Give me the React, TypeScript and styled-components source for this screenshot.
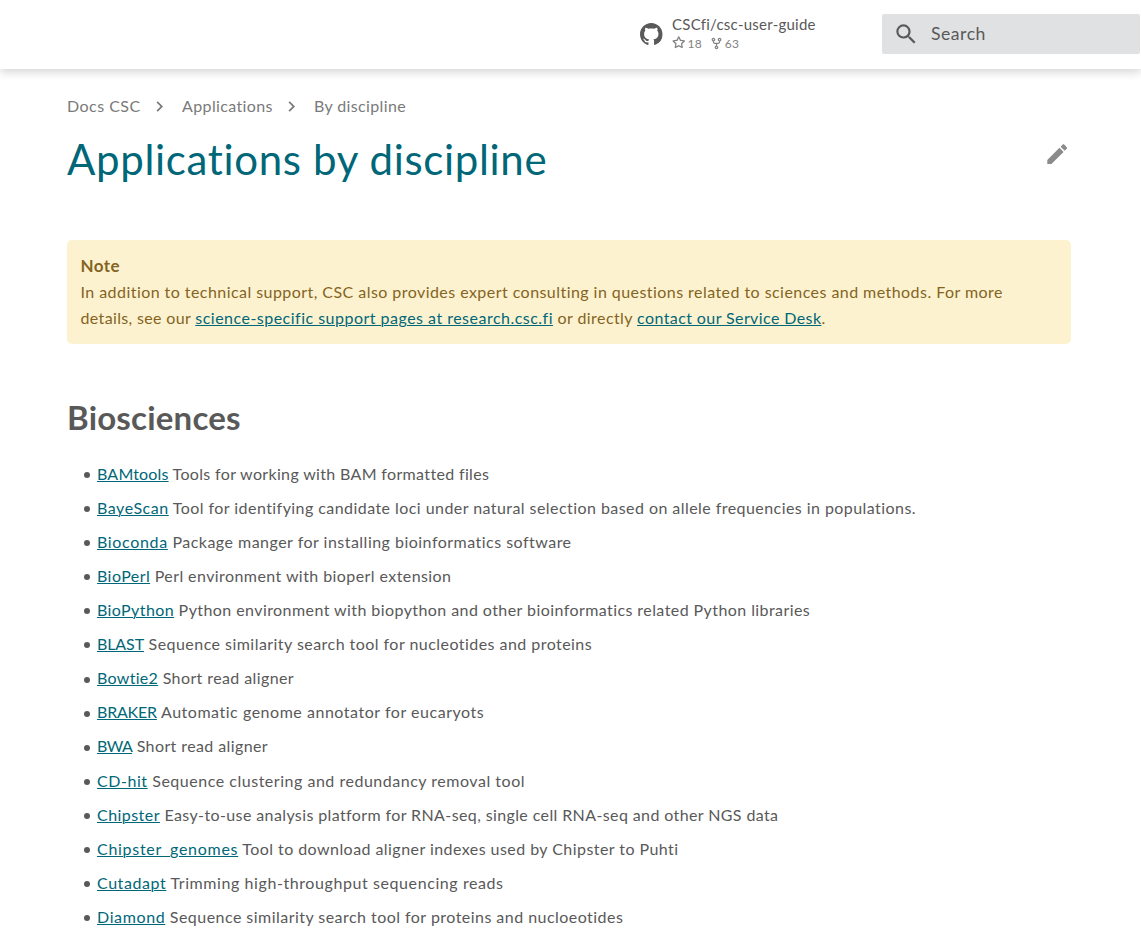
import React from "react";
import styled, { createGlobalStyle } from "styled-components";

const GlobalStyle = createGlobalStyle`
  html { overflow: hidden; }
  body {
    margin: 0;
    height: 937px;
    overflow: hidden;
    background: #fff;
    color: #595959;
    font-family: Lato, "Open Sans", sans-serif;
    font-size: 16px;
  }
`;

const Header = styled.header`
  display: flex;
  align-items: center;
  height: 69px;
  box-sizing: border-box;
  padding: 0 1px 1px 640px;
  background: #fff;
  box-shadow: 0 4.4px 8.8px rgba(0, 0, 0, 0.17);
`;

const Source = styled.a`
  display: flex;
  align-items: center;
  width: 242px;
  gap: 9.5px;
  flex: none;
`;

const SourceText = styled.div`
  display: flex;
  flex-direction: column;
`;

const RepoName = styled.span`
  font-size: 15px;
  line-height: 17px;
  padding-bottom: 1px;
  white-space: nowrap;
  letter-spacing: 0.25px;
`;

const Facts = styled.div`
  display: flex;
  gap: 8px;
  height: 18px;
  align-items: center;
  font-size: 12px;
  letter-spacing: 0.2px;
  color: #828282;
`;

const Fact = styled.span`
  display: flex;
  align-items: center;
  gap: 2px;
`;

const Search = styled.label`
  display: flex;
  align-items: center;
  flex: 1;
  height: 40px;
  box-sizing: border-box;
  padding-left: 11px;
  gap: 11.5px;
  border-radius: 2px;
  background: #e0e1e2;
  font-size: 17.6px;
  letter-spacing: 0.55px;
`;

const SearchText = styled.span`
  padding-bottom: 1px;
`;

const Icon = styled.svg<{ $size: number }>`
  width: ${(p) => p.$size}px;
  height: ${(p) => p.$size}px;
  flex: none;
  fill: currentColor;
`;

const Main = styled.main`
  width: 1004px;
  margin-left: 67px;
  padding-top: 25px;
`;

const Crumbs = styled.nav`
  display: flex;
  align-items: center;
  height: 26px;
  color: #7a7a7a;
`;

const Crumb = styled.span<{ $w: number; $track: number }>`
  width: ${(p) => p.$w}px;
  padding-bottom: 3px;
  letter-spacing: ${(p) => p.$track}px;
  white-space: nowrap;
`;

const CrumbArrow = styled(Icon)`
  margin: 0 12px 1px 8px;
`;

const TitleRow = styled.div`
  display: flex;
  justify-content: space-between;
  align-items: flex-start;
  height: 120px;
  color: #8b8b8b;
`;

const Title = styled.h1`
  margin: 13px 0 0;
  color: #006778;
  font-size: 42px;
  font-weight: 400;
  line-height: 52px;
  letter-spacing: 0.67px;
`;

const EditIcon = styled(Icon)`
  margin: 21px 1px 0 0;
`;

const Note = styled.section`
  height: 104px;
  box-sizing: border-box;
  padding: 13px 13.5px;
  border-radius: 5px;
  background: #fdf2d0;
  color: #846422;
  line-height: 26px;
`;

const NoteTitle = styled.div`
  font-weight: 700;
  font-size: 17px;
  letter-spacing: 0.45px;
`;

const NoteLine = styled.div`
  white-space: nowrap;
`;

const Tracked = styled.span<{ $track: number }>`
  letter-spacing: ${(p) => p.$track}px;
`;

const Link = styled.a<{ $track: number }>`
  color: #006778;
  letter-spacing: ${(p) => p.$track}px;
  text-decoration: underline;
  text-decoration-thickness: 1px;
  text-underline-offset: 1px;
`;

const Section = styled.h2`
  margin: 52px 0 22.32px;
  font-size: 33px;
  line-height: 42px;
  font-weight: 700;
  letter-spacing: 0.2px;
`;

const List = styled.ul`
  list-style: none;
  margin: 0;
  padding: 0 0 0 17px;
`;

const Item = styled.li`
  display: flex;
  align-items: center;
  height: 26px;
  margin-bottom: 8.08px;
  white-space: pre;
  &::before {
    content: "";
    width: 6px;
    height: 6px;
    margin: 3.5px 7.5px 0 -0.5px;
    border-radius: 50%;
    background: #595959;
  }
`;

type Entry = [name: string, nameTrack: number, text: string, textTrack: number];

const entries: Entry[] = [
  ["BAMtools", 0.18, "Tools for working with BAM formatted files", 0.34],
  ["BayeScan", 0.55, "Tool for identifying candidate loci under natural selection based on allele frequencies in populations.", 0.44],
  ["Bioconda", 0.67, "Package manger for installing bioinformatics software", 0.48],
  ["BioPerl", 0.44, "Perl environment with bioperl extension", 0.42],
  ["BioPython", 0.41, "Python environment with biopython and other bioinformatics related Python libraries", 0.425],
  ["BLAST", -0.1, "Sequence similarity search tool for nucleotides and proteins", 0.455],
  ["Bowtie2", 0.3, "Short read aligner", 0.4],
  ["BRAKER", -0.2, "Automatic genome annotator for eucaryots", 0.53],
  ["BWA", -0.6, "Short read aligner", 0.4],
  ["CD-hit", 0.55, "Sequence clustering and redundancy removal tool", 0.52],
  ["Chipster", 0.45, "Easy-to-use analysis platform for RNA-seq, single cell RNA-seq and other NGS data", 0.387],
  ["Chipster_genomes", 0.71, "Tool to download aligner indexes used by Chipster to Puhti", 0.445],
  ["Cutadapt", 0.57, "Trimming high-throughput sequencing reads", 0.585],
  ["Diamond", 0.62, "Sequence similarity search tool for proteins and nucloeotides", 0.462],
];

const MAGNIFY =
  "M9.5 3A6.5 6.5 0 0 1 16 9.5c0 1.61-.59 3.09-1.56 4.23l.27.27h.79l5 5-1.5 1.5-5-5v-.79l-.27-.27A6.516 6.516 0 0 1 9.5 16 6.5 6.5 0 0 1 3 9.5 6.5 6.5 0 0 1 9.5 3m0 2C7 5 5 7 5 9.5S7 14 9.5 14 14 12 14 9.5 12 5 9.5 5z";
const PENCIL =
  "M20.71 7.04c.39-.39.39-1.04 0-1.41l-2.34-2.34c-.37-.39-1.02-.39-1.41 0l-1.84 1.83 3.75 3.75M3 17.25V21h3.75L17.81 9.93l-3.75-3.75L3 17.25z";
const CHEVRON = "M8.59 16.58 13.17 12 8.59 7.41 10 6l6 6-6 6-1.41-1.42z";
const GITHUB =
  "M8 0C3.58 0 0 3.58 0 8c0 3.54 2.29 6.53 5.47 7.59.4.07.55-.17.55-.38 0-.19-.01-.82-.01-1.49-2.01.37-2.53-.49-2.69-.94-.09-.23-.48-.94-.82-1.13-.28-.15-.68-.52-.01-.53.63-.01 1.08.58 1.23.82.72 1.21 1.87.87 2.33.66.07-.52.28-.87.51-1.07-1.78-.2-3.64-.89-3.64-3.95 0-.87.31-1.59.82-2.15-.08-.2-.36-1.02.08-2.12 0 0 .67-.21 2.2.82.64-.18 1.32-.27 2-.27s1.36.09 2 .27c1.53-1.04 2.2-.82 2.2-.82.44 1.1.16 1.92.08 2.12.51.56.82 1.27.82 2.15 0 3.07-1.87 3.75-3.65 3.95.29.25.54.73.54 1.48 0 1.07-.01 1.93-.01 2.2 0 .21.15.46.55.38A8.01 8.01 0 0 0 16 8c0-4.42-3.58-8-8-8z";
const STAR =
  "M8 .25a.75.75 0 0 1 .673.418l1.882 3.815 4.21.612a.75.75 0 0 1 .416 1.279l-3.046 2.97.719 4.192a.751.751 0 0 1-1.088.791L8 12.347l-3.766 1.98a.75.75 0 0 1-1.088-.79l.72-4.194L.818 6.374a.75.75 0 0 1 .416-1.28l4.21-.611L7.327.668A.75.75 0 0 1 8 .25Zm0 2.445L6.615 5.5a.75.75 0 0 1-.564.41l-3.097.45 2.24 2.184a.75.75 0 0 1 .216.664l-.528 3.084 2.769-1.456a.75.75 0 0 1 .698 0l2.77 1.456-.53-3.084a.75.75 0 0 1 .216-.664l2.24-2.183-3.096-.45a.75.75 0 0 1-.564-.41L8 2.694Z";
const FORK =
  "M5 5.372v.878c0 .414.336.75.75.75h4.5a.75.75 0 0 0 .75-.75v-.878a2.25 2.25 0 1 1 1.5 0v.878a2.25 2.25 0 0 1-2.25 2.25h-1.5v2.128a2.251 2.251 0 1 1-1.5 0V8.5h-1.5A2.25 2.25 0 0 1 3.5 6.25v-.878a2.25 2.25 0 1 1 1.5 0ZM5 3.25a.75.75 0 1 0-1.5 0 .75.75 0 0 0 1.5 0Zm6.75.75a.75.75 0 1 0 0-1.5.75.75 0 0 0 0 1.5Zm-3 8.75a.75.75 0 1 0-1.5 0 .75.75 0 0 0 1.5 0Z";

export default function App() {
  return (
    <>
      <GlobalStyle />
      <Header>
        <Source>
          <Icon $size={22.5} viewBox="0 0 16 16"><path d={GITHUB} /></Icon>
          <SourceText>
            <RepoName>CSCfi/csc-user-guide</RepoName>
            <Facts>
              <Fact><Icon $size={13.5} viewBox="0 0 16 16"><path d={STAR} /></Icon>18</Fact>
              <Fact><Icon $size={13} viewBox="0 0 16 16"><path d={FORK} /></Icon>63</Fact>
            </Facts>
          </SourceText>
        </Source>
        <Search>
          <Icon $size={26.4} viewBox="0 0 24 24"><path d={MAGNIFY} /></Icon>
          <SearchText>Search</SearchText>
        </Search>
      </Header>
      <Main>
        <Crumbs>
          <Crumb $w={74} $track={0.48}>Docs CSC</Crumb>
          <CrumbArrow $size={21} viewBox="0 0 24 24"><path d={CHEVRON} /></CrumbArrow>
          <Crumb $w={91} $track={0.38}>Applications</Crumb>
          <CrumbArrow $size={21} viewBox="0 0 24 24"><path d={CHEVRON} /></CrumbArrow>
          <Crumb $w={92} $track={0.37}>By discipline</Crumb>
        </Crumbs>
        <TitleRow>
          <Title>Applications by discipline</Title>
          <EditIcon $size={26.4} viewBox="0 0 24 24"><path d={PENCIL} /></EditIcon>
        </TitleRow>
        <Note>
          <NoteTitle>Note</NoteTitle>
          <NoteLine>
            <Tracked $track={0.445}>In addition to technical support, CSC also provides expert consulting in questions related to sciences and methods. For more</Tracked>
          </NoteLine>
          <NoteLine>
            <Tracked $track={0.35}>details, see our </Tracked>
            <Link $track={0.485}>science-specific support pages at research.csc.fi</Link>
            <Tracked $track={0.42}> or directly </Tracked>
            <Link $track={0.4}>contact our Service Desk</Link>.
          </NoteLine>
        </Note>
        <Section>Biosciences</Section>
        <List>
          {entries.map(([name, nameTrack, text, textTrack]) => (
            <Item key={name}>
              <Link $track={nameTrack}>{name}</Link>
              <Tracked $track={textTrack}> {text}</Tracked>
            </Item>
          ))}
        </List>
      </Main>
    </>
  );
}
